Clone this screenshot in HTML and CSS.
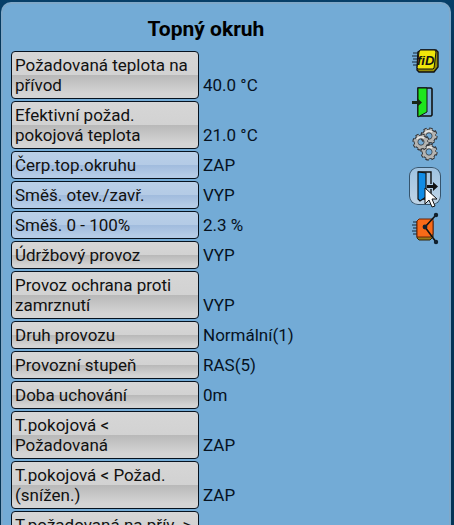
FILE: index.html
```html
<!DOCTYPE html>
<html lang="cs">
<head>
    <meta charset="UTF-8">
    <meta name="viewport" content="width=device-width, initial-scale=1.0">
    <title>Topný okruh</title>
    <link rel="stylesheet" href="styles.css">
</head>
<body>
    <div class="panel">
        <main class="content">
            <h1>Topný okruh</h1>

            <div class="row"><button class="item" id="p1">Požadovaná teplota na přívod</button><output class="value" aria-labelledby="p1">40.0 °C</output></div>
            <div class="row"><button class="item" id="p2">Efektivní požad. pokojová teplota</button><output class="value" aria-labelledby="p2">21.0 °C</output></div>
            <div class="row"><button class="item io" id="p3">Čerp.top.okruhu</button><output class="value" aria-labelledby="p3">ZAP</output></div>
            <div class="row"><button class="item io" id="p4">Směš. otev./zavř.</button><output class="value" aria-labelledby="p4">VYP</output></div>
            <div class="row"><button class="item io" id="p5">Směš. 0 - 100%</button><output class="value" aria-labelledby="p5">2.3 %</output></div>
            <div class="row"><button class="item" id="p6">Údržbový provoz</button><output class="value" aria-labelledby="p6">VYP</output></div>
            <div class="row"><button class="item" id="p7">Provoz ochrana proti zamrznutí</button><output class="value" aria-labelledby="p7">VYP</output></div>
            <div class="row"><button class="item" id="p8">Druh provozu</button><output class="value" aria-labelledby="p8">Normální(1)</output></div>
            <div class="row"><button class="item" id="p9">Provozní stupeň</button><output class="value" aria-labelledby="p9">RAS(5)</output></div>
            <div class="row"><button class="item" id="p10">Doba uchování</button><output class="value" aria-labelledby="p10">0m</output></div>
            <div class="row"><button class="item" id="p11">T.pokojová &lt; Požadovaná</button><output class="value" aria-labelledby="p11">ZAP</output></div>
            <div class="row"><button class="item" id="p12">T.pokojová &lt; Požad. (snížen.)</button><output class="value" aria-labelledby="p12">ZAP</output></div>
            <div class="row"><button class="item" id="p13">T.požadovaná na přív. &gt;</button></div>
        </main>

        <nav class="tools">
            <button class="tool" aria-label="fID">
                <svg viewBox="0 0 32 38">
                    <path d="M4 12h7M3 15h7M4 18h6M3 21h7M4 24h6" stroke="#16283a" stroke-width="1"/>
                    <path d="M9 11l3-2h15l2 2v15l-4 5H10l-2-2z" fill="#948b08" stroke="#111" stroke-width="1.400"/>
                    <path d="M10 11l1-2h15l1 2-2 16-1 1H9l-1-1z" fill="#f0e60a" stroke="#111" stroke-width="1"/>
                    <text x="8" y="24" class="fid">fiD</text>
                </svg>
            </button>
            <button class="tool" aria-label="Vstupy">
                <svg viewBox="0 0 32 38">
                    <path d="M9 5h13l1 1v26l-1 1H9z" fill="#78add6" stroke="#111" stroke-width="1.600"/>
                    <path d="M9 5h9v24l-9 5z" fill="#1ee51e" stroke="#111" stroke-width="1"/>
                    <path d="M3 18h5v-3l5 4.500-5 4.500v-3H3z" fill="#172717"/>
                </svg>
            </button>
            <button class="tool" aria-label="Nastavení">
                <svg viewBox="0 0 32 38">
                    <defs>
                        <g id="gear">
                            <circle r="6.600" fill="none" stroke="#2c2e32" stroke-width="4" stroke-dasharray="3 2.180"/>
                            <circle r="5" fill="none" stroke="#2c2e32" stroke-width="4.600"/>
                            <circle r="6.400" fill="none" stroke="#b4b4b2" stroke-width="2.400" stroke-dasharray="2.200 2.826"/>
                            <circle r="4.900" fill="none" stroke="#b4b4b2" stroke-width="3"/>
                            <path d="M-4-3A5 5 0 0 1 3-4" fill="none" stroke="#e8e8e6" stroke-width="1.600"/>
                        </g>
                    </defs>
                    <use href="#gear" x="20" y="11"/>
                    <use href="#gear" x="20" y="27"/>
                    <use href="#gear" x="12" y="17"/>
                </svg>
            </button>
            <button class="tool active" aria-label="Výstupy">
                <svg viewBox="0 0 32 38">
                    <path d="M9 5h13v12M22 22v10H9" fill="none" stroke="#111" stroke-width="1.400"/>
                    <path d="M9 5l8 1v24l-6 4-2-2z" fill="#108ce6" stroke="#111" stroke-width="1.200"/>
                    <path d="M18 18h6v-3l5 4.500-5 4.500v-3h-6z" fill="#111"/>
                </svg>
                <svg class="cursor" viewBox="0 0 14 22">
                    <path d="M1 1v16l4-4 3 7 3-1-3-7h5z" fill="#fff" stroke="#111" stroke-width="1"/>
                </svg>
            </button>
            <button class="tool" aria-label="Propojení">
                <svg viewBox="0 0 32 38">
                    <path d="M4 13h6M3 16h6M4 19h5M3 22h6M4 25h5" stroke="#16283a" stroke-width="1"/>
                    <path d="M8 12h16v16l-3 3H10l-2-2z" fill="#9b7a16" stroke="#33240a" stroke-width="1"/>
                    <path d="M8 12l2-2h14v15l-2 3H8z" fill="#f96a18" stroke="#6b2508" stroke-width="1"/>
                    <path d="M27 6L16 18l11 15" fill="none" stroke="#111" stroke-width="1.600"/>
                    <circle cx="27" cy="6" r="2.200" fill="#10202e"/>
                    <circle cx="16" cy="18" r="2.400" fill="#10202e"/>
                    <circle cx="27" cy="33" r="2.200" fill="#10202e"/>
                </svg>
            </button>
        </nav>
    </div>
</body>
</html>
```

FILE: styles.css
```css
* {
    box-sizing: border-box;
}
body {
    margin: 0;
    height: 100vh;
    padding: 2px 3px 0 1px;
    overflow: hidden;
    background: linear-gradient(#063f69, #043456 60px);
    font-family: Roboto, sans-serif;
    font-size: 17px;
    line-height: 20px;
    color: #06121f;
}
.panel {
    display: flex;
    height: 100%;
    padding: 0 8px;
    overflow: hidden;
    background: #73abd6;
    border: 2px solid #7fa8c9;
    border-bottom: none;
    border-radius: 10px 10px 0 0;
}
.content {
    flex: 1;
    min-width: 0;
    padding-right: 8px;
}
h1 {
    margin: 13px 0 10px;
    font-size: 21px;
    line-height: 24px;
    text-align: center;
    color: #000;
}
.row {
    display: flex;
    align-items: flex-end;
    gap: 4px;
    margin-bottom: 2px;
}
.item {
    flex: none;
    width: 188px;
    padding: 3px;
    font: inherit;
    color: #111;
    text-align: left;
    background: linear-gradient(#d6d6d6, #d2d2d2 50%, #b8b8b8 50%, #d4d4d4 90%);
    border: 1px solid #06121f;
    border-radius: 4px;
}
.item.io {
    background: linear-gradient(#b9cfe7, #b4cbe6 50%, #a0bbdd 50%, #b5cce7 90%);
}
.value {
    padding-bottom: 4px;
}
.tools {
    display: flex;
    flex-direction: column;
    gap: 4px;
    padding-top: 37px;
}
.tool {
    position: relative;
    width: 32px;
    height: 38px;
    padding: 0;
    background: none;
    border: none;
    border-radius: 9px;
}
.tool svg {
    display: block;
    width: 32px;
    height: 38px;
}
.tool.active {
    background: linear-gradient(#9fc3e1, #bfd4e6);
    box-shadow: inset 0 0 0 1px #35546d;
}
.tool .cursor {
    position: absolute;
    left: 15px;
    top: 20px;
    width: 14px;
    height: 22px;
}
.fid {
    font: italic bold 13px "Liberation Sans", sans-serif;
    fill: #111;
}
```
